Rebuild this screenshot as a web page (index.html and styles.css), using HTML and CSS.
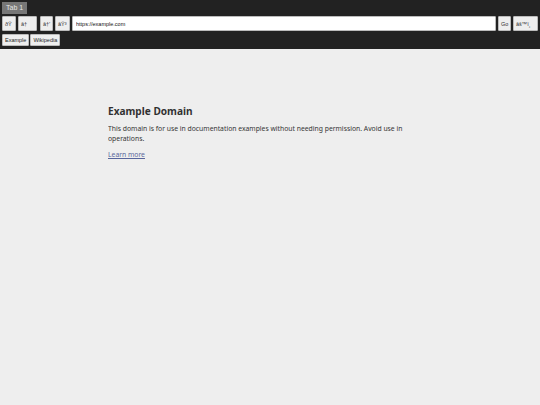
FILE: index.html
```html
<!DOCTYPE html>
<html>
<head>
<meta charset="utf-8">
<link rel="stylesheet" href="styles.css">
</head>
<body>
<div class="chrome">
  <div class="tabs"><span class="tab">Tab 1</span></div>
  <div class="toolbar">
    <button class="btn b1">ðŸ</button>
    <button class="btn b2">â†</button>
    <button class="btn b3">â†’</button>
    <button class="btn b4">âŸ³</button>
    <input class="url" value="https://example.com">
    <button class="btn go">Go</button>
    <button class="btn b6">âš™ï¸</button>
  </div>
  <div class="bookmarks">
    <button class="bm">Example</button>
    <button class="bm">Wikipedia</button>
  </div>
</div>
<div class="page">
  <div class="content">
    <h1 class="title">Example Domain</h1>
    <p class="text">This domain is for use in documentation examples without needing permission. Avoid use in operations.</p>
    <p class="text"><a class="link" href="#">Learn more</a></p>
  </div>
</div>
</body>
</html>
```

FILE: styles.css
```css
html, body {
  margin: 0;
  padding: 0;
  height: 100%;
  background: #eeeeee;
}
body {
  display: flex;
  flex-direction: column;
  font-family: "Liberation Sans", Arial, sans-serif;
}
.chrome {
  background: #222222;
  padding: 2px 2px 3px 2px;
}
.tabs {
  display: flex;
  height: 12px;
}
.tab {
  background: #777777;
  color: #e6e6e6;
  font-size: 7px;
  line-height: 12px;
  padding: 0 4px;
  width: 17px;
  white-space: nowrap;
}
.toolbar {
  display: flex;
  align-items: stretch;
  gap: 2px;
  margin-top: 2px;
  height: 15px;
}
.btn {
  margin: 0;
  padding: 0 2px;
  background: #eeeeee;
  border: 1px solid #bbbbbb;
  border-radius: 1px;
  font-family: "Liberation Sans", Arial, sans-serif;
  font-size: 5.5px;
  color: #333333;
  box-sizing: border-box;
  white-space: nowrap;
  overflow: hidden;
  text-align: left;
}
.b1 { width: 14px; }
.b2 { width: 19px; }
.b3 { width: 13px; margin-left: 1px; }
.b4 { width: 15px; }
.go { width: 13px; text-align: center; }
.b6 { width: 25px; }
.url {
  flex: 1;
  min-width: 0;
  margin: 0;
  padding: 0 3px;
  border: 1px solid #bbbbbb;
  border-radius: 1px;
  background: #ffffff;
  font-family: "Liberation Sans", Arial, sans-serif;
  font-size: 5.5px;
  color: #111111;
  box-sizing: border-box;
}
.bookmarks {
  display: flex;
  gap: 1px;
  margin-top: 3px;
  height: 12px;
}
.bm {
  margin: 0;
  padding: 0 2px;
  background: #eeeeee;
  border: 1px solid #bbbbbb;
  border-radius: 1px;
  font-family: "Liberation Sans", Arial, sans-serif;
  font-size: 5.5px;
  color: #222222;
  box-sizing: border-box;
}
.page {
  flex: 1;
  background: #eeeeee;
}
.content {
  width: 324px;
  margin: 0 auto;
  padding-top: 56px;
  font-family: "Noto Sans", "Open Sans", sans-serif;
  opacity: 0.8;
  color: #000000;
}
.title {
  margin: 0 0 6px 0;
  font-size: 10.1px;
  line-height: 13px;
  font-weight: bold;
}
.text {
  margin: 0 0 6px 0;
  font-size: 6.8px;
  line-height: 10px;
}
.link {
  color: #334488;
}
```
